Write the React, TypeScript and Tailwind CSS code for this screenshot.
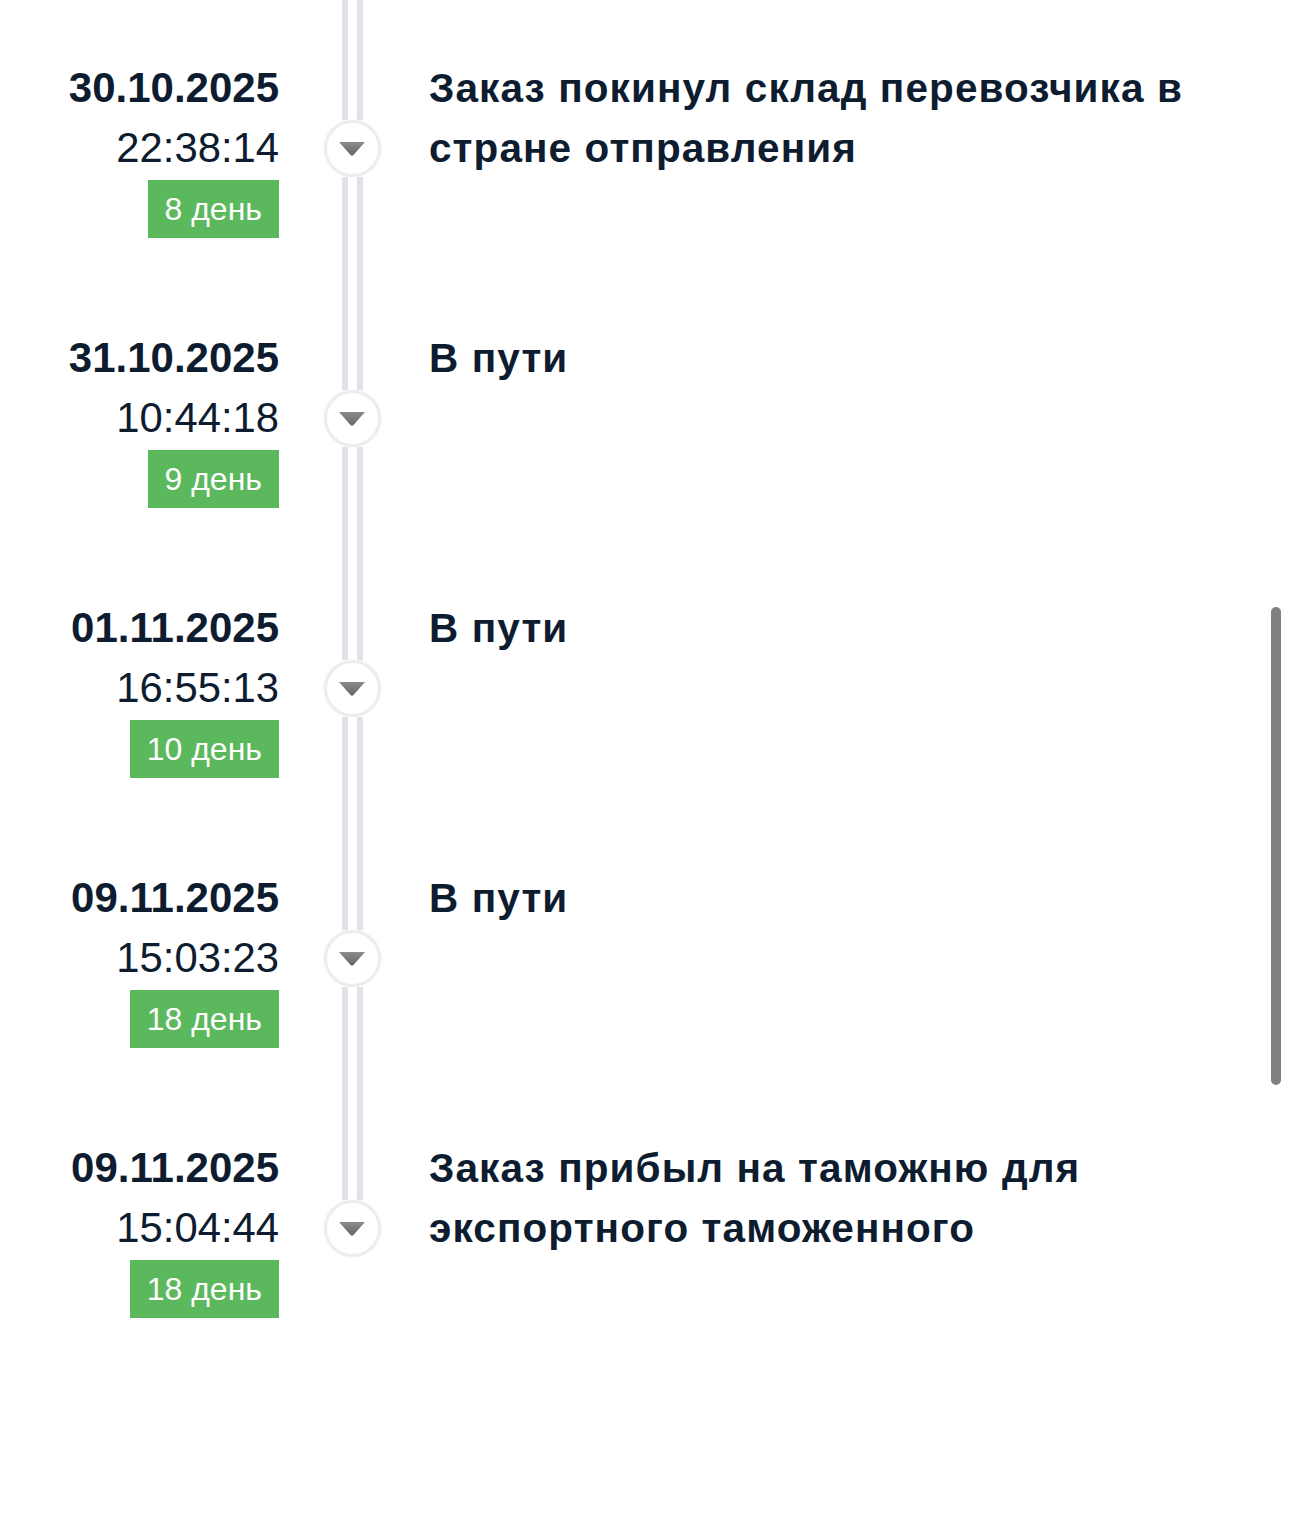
import React from "react";

type Ev = { date: string; time: string; day: string; title: string };

const events: Ev[] = [
  { date: "30.10.2025", time: "22:38:14", day: "8 день", title: "Заказ покинул склад перевозчика в стране отправления" },
  { date: "31.10.2025", time: "10:44:18", day: "9 день", title: "В пути" },
  { date: "01.11.2025", time: "16:55:13", day: "10 день", title: "В пути" },
  { date: "09.11.2025", time: "15:03:23", day: "18 день", title: "В пути" },
  { date: "09.11.2025", time: "15:04:44", day: "18 день", title: "Заказ прибыл на таможню для экспортного таможенного" },
];

function Segment({ grow, h }: { grow?: boolean; h?: string }) {
  return (
    <div
      className={
        (grow ? "flex-1 " : "") +
        (h ?? "") +
        " w-[21px] border-l-[6px] border-r-[6px] border-[#e0e1e9] bg-white"
      }
    />
  );
}

function Node() {
  return (
    <div className="w-[57px] h-[57px] rounded-full border-[3px] border-[#ededed] bg-white flex items-center justify-center shadow-[0_0_3px_rgba(0,0,0,0.05)]">
      <svg width="30" height="17" viewBox="0 0 30 17">
        <defs>
          <linearGradient id="tg" x1="0" y1="0" x2="0" y2="1">
            <stop offset="0" stopColor="#8c8c8c" />
            <stop offset="1" stopColor="#666666" />
          </linearGradient>
        </defs>
        <path d="M2 2 L28 2 L16.5 15 Q15 16.5 13.5 15 Z" fill="url(#tg)" />
      </svg>
    </div>
  );
}

export default function App() {
  return (
    <div
      className="relative w-[1290px] h-[1513px] bg-white overflow-hidden text-[#0e1c30]"
      style={{ fontFamily: '"Liberation Sans", Arial, sans-serif' }}
    >
      <div className="flex flex-col">
        {events.map((e, i) => {
          const last = i === events.length - 1;
          return (
            <div key={i} className="flex h-[270px]">
              <div className="w-[279px] shrink-0 pt-[58px] flex flex-col items-end">
                <div className="text-[42px] leading-[60px] font-bold">{e.date}</div>
                <div className="text-[41.8px] leading-[60px]">{e.time}</div>
                <div className="mt-[2px] h-[58px] px-[17px] bg-[#5cb85c] text-white text-[32px] leading-[58px]">
                  {e.day}
                </div>
              </div>
              <div className="w-[150px] shrink-0 flex flex-col items-center pr-[4px]">
                <Segment h="h-[120px]" />
                <Node />
                {!last && <Segment grow />}
              </div>
              <div className="flex-1 pt-[58px] pr-[60px]">
                <div className="text-[40.5px] leading-[60px] font-bold tracking-[1.1px]">{e.title}</div>
              </div>
            </div>
          );
        })}
      </div>
      <div className="absolute left-[1271px] top-[607px] w-[10px] h-[478px] rounded-full bg-[#808080]" />
    </div>
  );
}
